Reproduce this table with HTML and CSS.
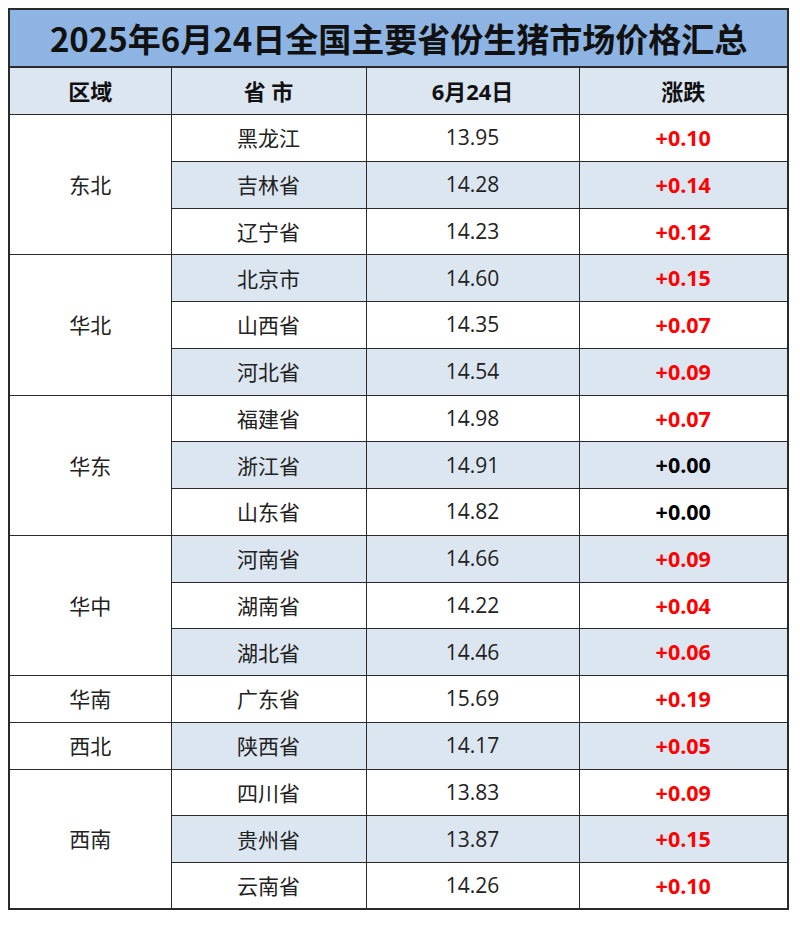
FILE: index.html
```html
<!DOCTYPE html>
<html lang="zh-CN">
<head>
<meta charset="utf-8">
<title>2025年6月24日全国主要省份生猪市场价格汇总</title>
<link rel="stylesheet" href="styles.css">
</head>
<body>
<table class="price-table">
  <colgroup>
    <col class="c-region">
    <col class="c-prov">
    <col class="c-price">
    <col class="c-change">
  </colgroup>
  <thead>
    <tr class="title-row"><th colspan="4">2025年6月24日全国主要省份生猪市场价格汇总</th></tr>
    <tr class="head-row"><th>区域</th><th>省 市</th><th>6月24日</th><th>涨跌</th></tr>
  </thead>
  <tbody>
    <tr><td class="region" rowspan="3">东北</td><td>黑龙江</td><td class="num">13.95</td><td class="chg up">+0.10</td></tr>
    <tr class="alt"><td>吉林省</td><td class="num">14.28</td><td class="chg up">+0.14</td></tr>
    <tr><td>辽宁省</td><td class="num">14.23</td><td class="chg up">+0.12</td></tr>
    <tr class="alt"><td class="region" rowspan="3">华北</td><td>北京市</td><td class="num">14.60</td><td class="chg up">+0.15</td></tr>
    <tr><td>山西省</td><td class="num">14.35</td><td class="chg up">+0.07</td></tr>
    <tr class="alt"><td>河北省</td><td class="num">14.54</td><td class="chg up">+0.09</td></tr>
    <tr><td class="region" rowspan="3">华东</td><td>福建省</td><td class="num">14.98</td><td class="chg up">+0.07</td></tr>
    <tr class="alt"><td>浙江省</td><td class="num">14.91</td><td class="chg">+0.00</td></tr>
    <tr><td>山东省</td><td class="num">14.82</td><td class="chg">+0.00</td></tr>
    <tr class="alt"><td class="region" rowspan="3">华中</td><td>河南省</td><td class="num">14.66</td><td class="chg up">+0.09</td></tr>
    <tr><td>湖南省</td><td class="num">14.22</td><td class="chg up">+0.04</td></tr>
    <tr class="alt"><td>湖北省</td><td class="num">14.46</td><td class="chg up">+0.06</td></tr>
    <tr><td class="region">华南</td><td>广东省</td><td class="num">15.69</td><td class="chg up">+0.19</td></tr>
    <tr class="alt"><td class="region">西北</td><td>陕西省</td><td class="num">14.17</td><td class="chg up">+0.05</td></tr>
    <tr><td class="region" rowspan="3">西南</td><td>四川省</td><td class="num">13.83</td><td class="chg up">+0.09</td></tr>
    <tr class="alt"><td>贵州省</td><td class="num">13.87</td><td class="chg up">+0.15</td></tr>
    <tr><td>云南省</td><td class="num">14.26</td><td class="chg up">+0.10</td></tr>
  </tbody>
</table>
</body>
</html>
```
FILE: styles.css
```css
html, body {
  margin: 0;
  padding: 0;
  background: #ffffff;
}
body {
  padding: 8px;
  font-family: "Open Sans", "Noto Sans CJK SC", sans-serif;
  color: #222222;
}
.price-table {
  border-collapse: collapse;
  width: 779px;
  table-layout: fixed;
  border: 2px solid #2a2a2a;
}
.c-region { width: 162px; }
.c-prov { width: 195px; }
.c-price { width: 213px; }
.c-change { width: 209px; }
.price-table th,
.price-table td {
  border: 1px solid #2a2a2a;
  padding: 0;
  text-align: center;
  vertical-align: middle;
  font-size: 21px;
  line-height: 1;
}
.title-row th {
  height: 56px;
  background: #8db4e2;
  font-family: "Noto Sans CJK SC", sans-serif;
  font-size: 33px;
  font-weight: 700;
  color: #111111;
  border-width: 2px;
}
.head-row th {
  height: 46px;
  background: #dce6f1;
  font-family: "Open Sans", "Noto Sans CJK SC", sans-serif;
  font-weight: 700;
  font-size: 22px;
  color: #111111;
}
tbody tr { height: 46.76px; }
tbody td {
  font-family: "Noto Sans CJK SC", sans-serif;
  font-weight: 400;
}
tbody td.num {
  font-family: "Open Sans", sans-serif;
}
tbody tr.alt td { background: #dce6f1; }
tbody tr.alt td.region { background: #ffffff; }
td.chg {
  font-family: "Open Sans", sans-serif;
  font-weight: 700;
  font-size: 21.5px;
  color: #000000;
}
td.chg.up { color: #ff0000; }
```
